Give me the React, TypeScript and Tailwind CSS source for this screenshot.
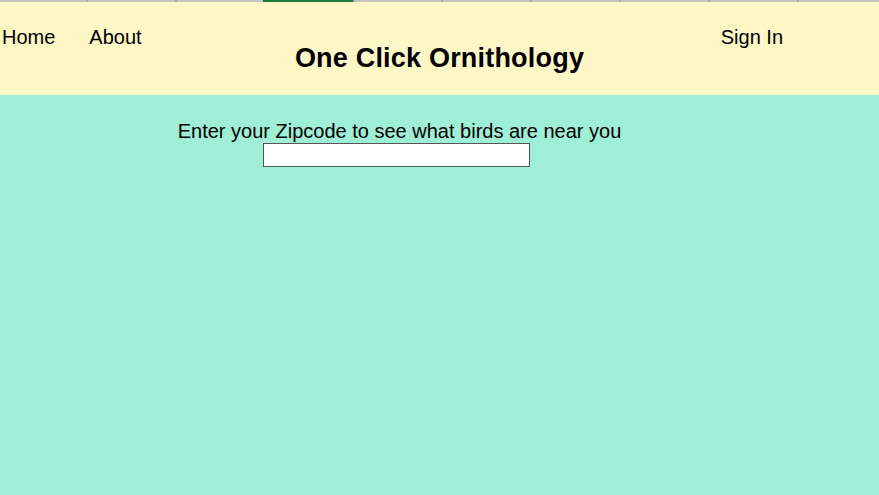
const ticks = [86, 175, 264, 353, 441, 530, 619, 708, 797];

const TopStrip = () => (
  <div className="relative h-[2px] w-full bg-[#c4c4c0]">
    {ticks.map((x) => (
      <span key={x} className="absolute top-0 h-[2px] w-[2px] bg-[#a9a9a5]" style={{ left: x }} />
    ))}
    <span className="absolute top-0 left-[263px] h-[2px] w-[90px] bg-[#1e7a3c]" />
  </div>
);

const Header = () => {
  return (
    <header className="flex h-[93px] bg-[#fff8c6] text-black">
      <nav className="flex flex-1 items-start gap-[34px] pt-[20px] text-[20px]">
        <a href="#" className="ml-[2px]">Home</a>
        <a href="#">About</a>
      </nav>
      <h1 className="pt-[36px] text-[27px] font-bold tracking-[0.2px]">One Click Ornithology</h1>
      <div className="flex flex-1 items-start justify-end pt-[20px] text-[20px]">
        <a href="#" className="mr-[96px]">Sign In</a>
      </div>
    </header>
  );
};

export default function App() {
  return (
    <div className="flex h-[495px] w-[879px] flex-col bg-[#9feed6] font-['Liberation_Sans',Arial,sans-serif]">
      <TopStrip />
      <Header />
      <main className="flex w-[799px] flex-col items-center pt-[24px]">
        <label htmlFor="zip" className="text-[20px] leading-[24px] text-black">
          Enter your Zipcode to see what birds are near you
        </label>
        <input
          id="zip"
          type="text"
          className="mr-[6px] h-[24px] w-[267px] border border-[#555] bg-white outline-none"
        />
      </main>
    </div>
  );
}
